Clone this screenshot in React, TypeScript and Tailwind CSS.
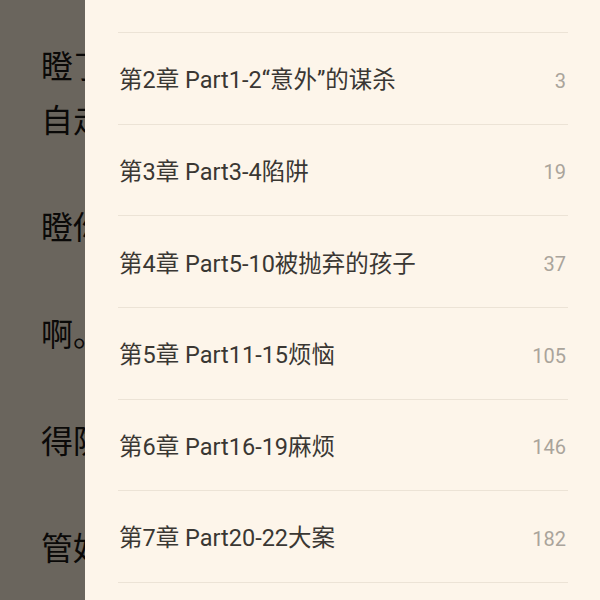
import React from "react";

const chapters = [
  { t: "第2章 Part1-2“意外”的谋杀", p: "3" },
  { t: "第3章 Part3-4陷阱", p: "19" },
  { t: "第4章 Part5-10被抛弃的孩子", p: "37" },
  { t: "第5章 Part11-15烦恼", p: "105" },
  { t: "第6章 Part16-19麻烦", p: "146" },
  { t: "第7章 Part20-22大案", p: "182" },
];

const lines = ["瞪了他一眼，", "自走开了。", "", "瞪你一眼", "", "啊。", "", "得防着他", "", "管好自己"];

export default function App() {
  return (
    <div className="flex w-[600px] h-[600px] overflow-hidden bg-[#fdf5ea]">
      <div className="w-[85px] shrink-0 overflow-hidden bg-[#6a655d] pt-[38px] pl-[41px]">
        {lines.map((l, i) => (
          <div
            key={i}
            className="h-[53.5px] leading-[53.5px] text-[32px] text-[#0a0908] whitespace-nowrap"
            style={{ fontFamily: '"Noto Sans CJK SC", serif' }}
          >
            {l}
          </div>
        ))}
      </div>
      <div
        className="flex-1 flex flex-col pl-[33px] pr-[32px]"
        style={{ fontFamily: 'Roboto, "Noto Sans CJK SC", sans-serif' }}
      >
        <div className="h-[33px] shrink-0 border-b border-[#ece3d6]" />
        {chapters.map((c) => (
          <div
            key={c.t}
            className="h-[91.67px] shrink-0 flex items-center justify-between border-b border-[#ece3d6] pt-[5px]"
          >
            <span className="text-[23.5px] text-[#3a3733] pl-[1px]">{c.t}</span>
            <span className="text-[20px] text-[#aaa49b] pr-[2px]">{c.p}</span>
          </div>
        ))}
      </div>
    </div>
  );
}
